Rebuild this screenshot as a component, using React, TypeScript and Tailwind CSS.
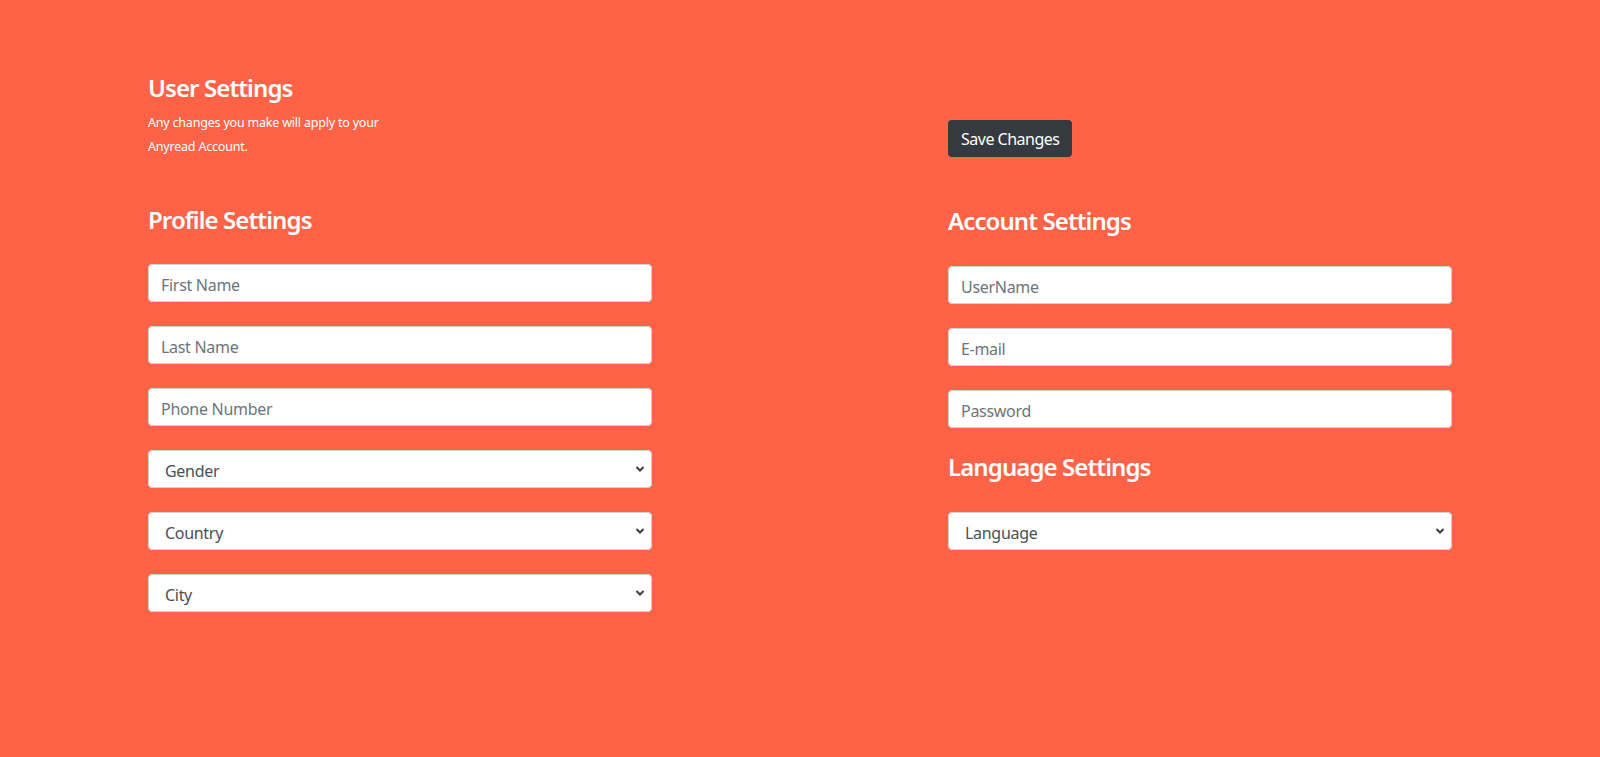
import React from "react";

const font = { fontFamily: '"Noto Sans", "Open Sans", sans-serif' };

function Field({ placeholder }: { placeholder: string }) {
  return (
    <input
      type="text"
      placeholder={placeholder}
      className="block w-[504px] h-[38px] rounded-[4px] border border-[#ced4da] bg-white px-3 pt-[3px] text-[16px] tracking-[-0.3px] text-[#495057] placeholder:text-[#6c757d] outline-none"
    />
  );
}

function Select({ label }: { label: string }) {
  return (
    <div className="relative w-[504px] h-[38px]">
      <select
        defaultValue=""
        className="block w-full h-full appearance-none rounded-[4px] border border-[#ced4da] bg-white pl-4 pr-8 pt-[3px] text-[16px] tracking-[-0.3px] text-[#495057] outline-none"
      >
        <option value="">{label}</option>
      </select>
      <svg
        className="pointer-events-none absolute right-[7px] top-1/2 -translate-y-1/2"
        width="10"
        height="7"
        viewBox="0 0 10 7"
      >
        <path d="M1.5 1.5 L5 5 L8.5 1.5" fill="none" stroke="#3b3b3b" strokeWidth="2" />
      </svg>
    </div>
  );
}

export default function App() {
  return (
    <div className="min-h-[757px] w-full bg-[#ff6347] text-white" style={font}>
      <div className="flex pl-[148px] pt-[73px]">
        {/* Left column */}
        <div className="w-[504px] flex flex-col">
          <h4 className="text-[24px] leading-[29px] font-semibold tracking-[-0.9px]">User Settings</h4>
          <p className="mt-[9px] text-[12.5px] leading-[24px] tracking-[-0.2px]">
            Any changes you make will apply to your
            <br />
            Anyread Account.
          </p>
          <h4 className="mt-[46px] text-[24px] leading-[29px] font-semibold tracking-[-0.9px]">Profile Settings</h4>
          <div className="mt-[30px] flex flex-col gap-[24px]">
            <Field placeholder="First Name" />
            <Field placeholder="Last Name" />
            <Field placeholder="Phone Number" />
            <Select label="Gender" />
            <Select label="Country" />
            <Select label="City" />
          </div>
        </div>

        {/* Right column */}
        <div className="ml-[296px] w-[504px] flex flex-col">
          <div className="pt-[47px]">
            <button className="h-[37px] rounded-[4px] bg-[#343a40] px-[13px] pt-[1px] text-[16px] tracking-[-0.5px] text-white">
              Save Changes
            </button>
          </div>
          <h4 className="mt-[49px] text-[24px] leading-[29px] font-semibold tracking-[-0.9px]">Account Settings</h4>
          <div className="mt-[31px] flex flex-col gap-[24px]">
            <Field placeholder="UserName" />
            <Field placeholder="E-mail" />
            <Field placeholder="Password" />
          </div>
          <h4 className="mt-[24px] text-[24px] leading-[29px] font-semibold tracking-[-0.9px]">Language Settings</h4>
          <div className="mt-[31px]">
            <Select label="Language" />
          </div>
        </div>
      </div>
    </div>
  );
}
